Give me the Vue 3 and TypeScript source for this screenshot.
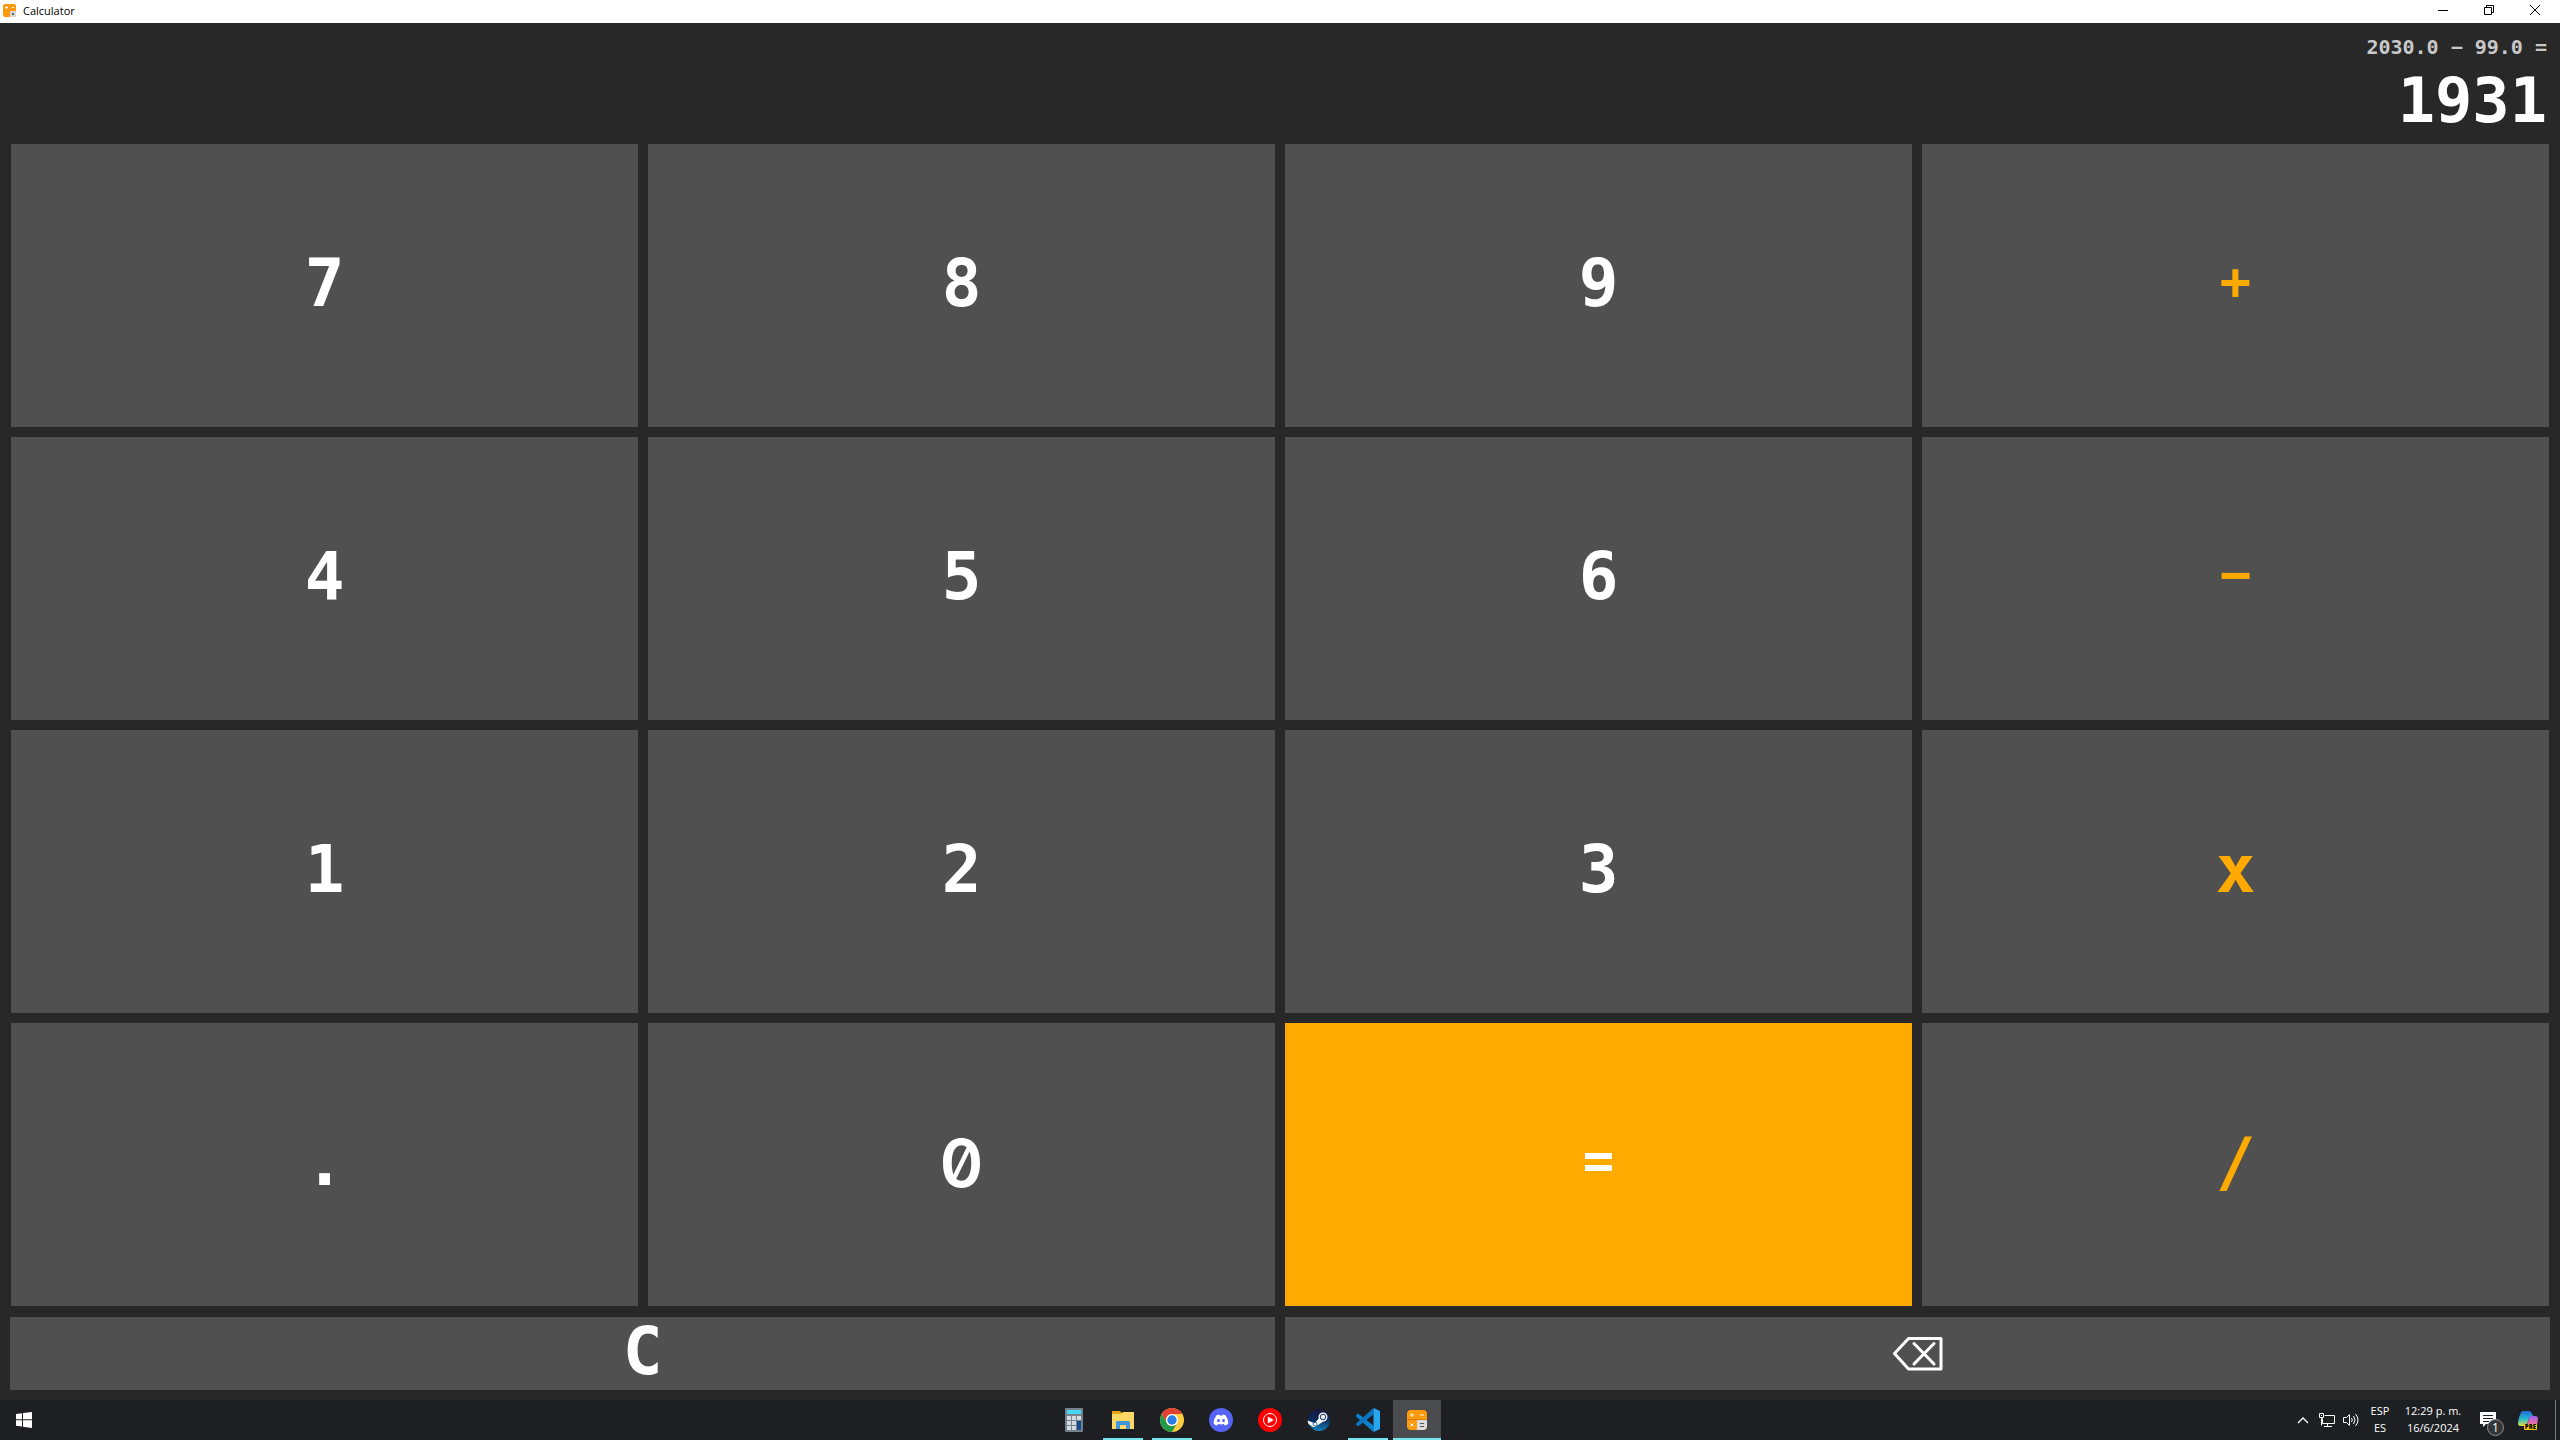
<script setup lang="ts">
import { ref } from 'vue'

interface Key {
  label: string
  kind: 'digit' | 'zero' | 'sign' | 'operator' | 'equals'
}

const keys: Key[] = [
  { label: '7', kind: 'digit' },
  { label: '8', kind: 'digit' },
  { label: '9', kind: 'digit' },
  { label: '+', kind: 'sign' },
  { label: '4', kind: 'digit' },
  { label: '5', kind: 'digit' },
  { label: '6', kind: 'digit' },
  { label: '−', kind: 'sign' },
  { label: '1', kind: 'digit' },
  { label: '2', kind: 'digit' },
  { label: '3', kind: 'digit' },
  { label: 'x', kind: 'operator' },
  { label: '.', kind: 'digit' },
  { label: '0', kind: 'zero' },
  { label: '=', kind: 'equals' },
  { label: '/', kind: 'operator' },
]

const expression = ref('2030.0 − 99.0 =')
const result = ref('1931')

function press(key: Key) {
  if (key.kind === 'digit' || key.kind === 'zero') result.value += key.label
}

function clearAll() {
  expression.value = ''
  result.value = ''
}

function backspace() {
  result.value = result.value.slice(0, -1)
}
</script>

<template>
  <div class="desktop">
    <header class="titlebar">
      <svg class="app-icon" width="13" height="13" viewBox="0 0 13 13" aria-hidden="true">
        <rect width="13" height="13" rx="2" fill="#ff9a0c" />
        <path d="M7 7h6v4a2 2 0 0 1-2 2H7z" fill="#d8d8d8" />
        <path d="M2 3.5h3M3.500 2v3M9 3.500h2" stroke="#fff" />
        <rect x="9" y="9" width="2" height="2" fill="#666" />
      </svg>
      <span class="title">Calculator</span>
      <div class="window-controls">
        <button type="button" aria-label="Minimize">
          <svg width="12" height="12" viewBox="0 0 12 12"><path d="M1 6.500h10" stroke="#000" /></svg>
        </button>
        <button type="button" aria-label="Restore">
          <svg width="12" height="12" viewBox="0 0 12 12" fill="none" stroke="#000">
            <path d="M1.500 3.500h7v7h-7zM3.500 3.500v-2h7v7h-2" />
          </svg>
        </button>
        <button type="button" aria-label="Close">
          <svg width="12" height="12" viewBox="0 0 12 12"><path d="M1 1l10 10M11 1L1 11" stroke="#000" /></svg>
        </button>
      </div>
    </header>

    <main class="calculator">
      <section class="display">
        <output class="expression">{{ expression }}</output>
        <output class="result">{{ result }}</output>
      </section>

      <section class="keypad">
        <button
          v-for="key in keys"
          :key="key.label"
          type="button"
          class="key"
          :class="key.kind"
          @click="press(key)"
        >{{ key.label }}</button>
      </section>

      <section class="actions">
        <button type="button" class="key digit" @click="clearAll">C</button>
        <button type="button" class="key" aria-label="Backspace" @click="backspace">
          <svg width="50" height="34" viewBox="0 0 50 34" fill="none" stroke="#fff" stroke-width="3">
            <path d="M1.500 16.500L15.500 1.500H48V32H15.500z" stroke-linejoin="round" />
            <path d="M21 6.500l20 20.500M41 6.500L21 27" stroke-linecap="round" />
          </svg>
        </button>
      </section>
    </main>

    <footer class="taskbar">
      <div class="start-area">
        <button type="button" class="start" aria-label="Start">
          <svg width="16" height="16" viewBox="0 0 16 16" fill="#fff">
            <path d="M0 2l6-.8v6H0zM7 1.100L16 0v7.200H7zM0 8.200h6v6.200L0 13.700zM7 8.200h9V16l-9-1.200z" />
          </svg>
        </button>
      </div>

      <nav class="apps">
        <button type="button" class="app" aria-label="Calculator tool">
          <svg width="24" height="24" viewBox="0 0 24 24">
            <rect x="3" width="18" height="24" rx="1" fill="#75828c" />
            <rect x="5" y="2" width="14" height="4" fill="#45d5fa" />
            <path d="M5 8h4v4H5zM10 8h4v4h-4zM15 8h4v4h-4zM5 13h4v4H5zM10 13h4v4h-4zM5 18h4v4H5zM10 18h4v4h-4z" fill="#d3dbe1" />
            <path d="M15 13h4v9h-4z" fill="#174a8b" />
          </svg>
        </button>
        <button type="button" class="app open" aria-label="File Explorer">
          <svg width="24" height="24" viewBox="0 0 24 24">
            <path d="M1 3h8l2 2h12v16H1z" fill="#e9a614" />
            <path d="M1 6h9l2-2h11v17H1z" fill="#ffd766" />
            <path d="M5 21v-7l1-1h12l1 1v7h-4v-4H9v4z" fill="#3f96d8" />
          </svg>
        </button>
        <button type="button" class="app open" aria-label="Chrome">
          <svg width="24" height="24" viewBox="0 0 24 24">
            <circle cx="12" cy="12" r="12" fill="#ffcd40" />
            <path d="M1.610 6A12 12 0 0 1 22.390 6H12a6 6 0 0 0-5.200 9z" fill="#e14135" />
            <path d="M1.610 6A12 12 0 0 0 12 24l5.200-9a6 6 0 0 1-10.400 0z" fill="#239a4b" />
            <circle cx="12" cy="12" r="6" fill="#fff" />
            <circle cx="12" cy="12" r="4.700" fill="#2a7ee8" />
          </svg>
        </button>
        <button type="button" class="app" aria-label="Discord">
          <svg width="24" height="24" viewBox="0 0 24 24">
            <circle cx="12" cy="12" r="12" fill="#5663f7" />
            <path d="M7.500 7.200l2.500-.7.600 1.100h2.800l.6-1.100 2.500.7c2 2.900 3 5.600 2.700 8.800-1.200.9-2.300 1.300-3.400 1.500l-.9-1.500q-2.900.8-5.800 0l-.9 1.500c-1.100-.2-2.200-.6-3.400-1.500-.3-3.200.7-5.900 2.700-8.800z" fill="#fff" />
            <circle cx="9.500" cy="12.500" r="1.500" fill="#5663f7" />
            <circle cx="14.500" cy="12.500" r="1.500" fill="#5663f7" />
          </svg>
        </button>
        <button type="button" class="app" aria-label="YouTube Music">
          <svg width="24" height="24" viewBox="0 0 24 24">
            <circle cx="12" cy="12" r="12" fill="#f00" />
            <circle cx="12" cy="12" r="6.500" fill="none" stroke="#fff" />
            <path d="M9.800 8.500l6 3.500-6 3.500z" fill="#fff" />
          </svg>
        </button>
        <button type="button" class="app" aria-label="Steam">
          <svg width="24" height="24" viewBox="0 0 24 24">
            <defs>
              <linearGradient id="steam" x1="0" y1="0" x2="0" y2="1">
                <stop offset="0" stop-color="#17173f" />
                <stop offset=".5" stop-color="#0b2b5c" />
                <stop offset="1" stop-color="#1484bd" />
              </linearGradient>
            </defs>
            <circle cx="12" cy="12" r="11" fill="url(#steam)" />
            <path d="M.5 12.500l7 2.800 4.500-3.500 3 2-4.500 3.200a4 4 0 0 1-6 1L1.500 16z" fill="#fff" />
            <path d="M8 15l5-6 4 4-6 4z" fill="#fff" />
            <circle cx="16" cy="9" r="4.500" fill="#fff" />
            <circle cx="16" cy="9" r="2.800" fill="#e8edf2" stroke="#14305a" />
            <circle cx="8" cy="16" r="2" fill="none" stroke="#17568c" stroke-width=".8" />
          </svg>
        </button>
        <button type="button" class="app open" aria-label="Visual Studio Code">
          <svg width="24" height="24" viewBox="0 0 24 24">
            <path d="M17.500 17.500L2 5.500 0 7.200v1.300L17.500 24z" fill="#0a84d0" />
            <path d="M17.500 6.500L2 18.500 0 16.800v-1.300L17.500 0z" fill="#0a74bd" />
            <path d="M17.500 0L24 3v18l-6.500 3z" fill="#29a6f2" />
          </svg>
        </button>
        <button type="button" class="app open active" aria-label="Calculator">
          <svg width="24" height="24" viewBox="0 0 24 24">
            <rect x="2" y="2" width="20" height="20" rx="4" fill="#ff9a0c" />
            <path d="M12 12h10v6a4 4 0 0 1-4 4h-6z" fill="#dcdcdc" />
            <path d="M2 11.500h20" stroke="#db7b00" />
            <path d="M5 7h4M7 5v4M15 7h4" stroke="#ffdca6" stroke-width="1.500" />
            <path d="M5.500 15.500l3 3M8.500 15.500l-3 3" stroke="#fff" />
            <path d="M15 15.500h4M15 18.500h4" stroke="#555" />
          </svg>
        </button>
      </nav>

      <div class="tray">
        <button type="button" class="tray-button chevron" aria-label="Show hidden icons">
          <svg width="12" height="8" viewBox="0 0 12 8"><path d="M1 7l5-5 5 5" fill="none" stroke="#fff" stroke-width="1.300" /></svg>
        </button>
        <button type="button" class="tray-button" aria-label="Network">
          <svg width="16" height="16" viewBox="0 0 16 16" fill="none" stroke="#fff">
            <path d="M5.500 3.500h10v8h-12v-5M8.500 11.500v3M5 14.500h8M.5 1.500h4v4h-4zM2 3.500h1M2.500 5.500v8" />
          </svg>
        </button>
        <button type="button" class="tray-button" aria-label="Volume">
          <svg width="16" height="16" viewBox="0 0 16 16" fill="none" stroke="#fff">
            <path d="M.5 5.500h3l3-3v11l-3-3h-3zM8.500 6q1.500 2 0 4M10.500 4q3 4 0 8M12.500 2q5 6 0 12" />
          </svg>
        </button>
        <button type="button" class="tray-text language"><span>ESP</span><span>ES</span></button>
        <button type="button" class="tray-text clock"><span>12:29 p. m.</span><span>16/6/2024</span></button>
        <button type="button" class="tray-button notifications" aria-label="Notifications">
          <svg width="16" height="16" viewBox="0 0 16 16">
            <path d="M0 0h16v12H6l-3 3v-3H0z" fill="#fff" />
            <path d="M3 3.500h10M3 6.500h10M3 9.500h6" stroke="#1e1f23" />
          </svg>
          <span class="badge">1</span>
        </button>
        <button type="button" class="tray-button copilot" aria-label="Copilot">
          <svg width="20" height="19" viewBox="0 0 20 19">
            <defs>
              <linearGradient id="copilotLeft" x1="0" y1="0" x2="0" y2="1">
                <stop offset="0" stop-color="#2468d8" />
                <stop offset=".5" stop-color="#22b8cf" />
                <stop offset="1" stop-color="#d9dc45" />
              </linearGradient>
              <linearGradient id="copilotRight" x1="0" y1="0" x2="0" y2="1">
                <stop offset="0" stop-color="#9c61ee" />
                <stop offset="1" stop-color="#fb7290" />
              </linearGradient>
            </defs>
            <path d="M5 0h6q2 0 2.500 2L15 5h-3L9 13q-1 2-3 2H2q-2 0-2-3Q1 5 3 1.500 4 0 5 0z" fill="url(#copilotLeft)" />
            <path d="M12 5h5q3 0 3 3l-1 6H9z" fill="url(#copilotRight)" />
          </svg>
          <span class="pre">PRE</span>
        </button>
        <button type="button" class="show-desktop" aria-label="Show desktop"></button>
      </div>
    </footer>
  </div>
</template>

<style>
body {
  margin: 0;
  background: #282828;
}
</style>

<style scoped>
.desktop {
  display: flex;
  flex-direction: column;
  min-height: 100vh;
  font-family: "Open Sans", "Noto Sans", sans-serif;
}

button {
  margin: 0;
  padding: 0;
  border: 0;
  background: transparent;
  color: #fff;
  font: inherit;
}

svg {
  display: block;
}

.titlebar {
  display: flex;
  align-items: center;
  box-sizing: border-box;
  height: 23px;
  padding: 0 2px 2px 3px;
  background: #fff;
  color: #000;
  font-size: 11px;
}

.title {
  margin-left: 7px;
}

.window-controls {
  display: flex;
  align-self: flex-start;
  margin-left: auto;
}

.window-controls button {
  display: flex;
  align-items: center;
  justify-content: center;
  width: 46px;
  height: 20px;
}

.calculator {
  display: flex;
  flex: 1;
  flex-direction: column;
  background: #282828;
  font-family: "DejaVu Sans Mono", "Liberation Mono", monospace;
  font-weight: 700;
}

.display {
  display: flex;
  flex-direction: column;
  align-items: flex-end;
  height: 107px;
  padding: 14px 13px 0 0;
}

.expression {
  color: #c8c8c8;
  font-size: 20px;
  line-height: 20px;
}

.result {
  color: #fff;
  font-size: 62px;
  line-height: 88px;
}

.keypad {
  display: grid;
  flex: 1;
  grid-template-columns: repeat(4, 1fr);
  grid-template-rows: repeat(4, 1fr);
  gap: 10px;
  padding: 0 11px;
}

.actions {
  display: grid;
  grid-template-columns: repeat(2, 1fr);
  gap: 10px;
  height: 73px;
  padding: 11px 10px 10px;
}

.key {
  display: flex;
  align-items: center;
  justify-content: center;
  background: #505050;
  font-size: 66px;
  line-height: 68px;
}

.digit,
.zero,
.operator {
  padding-bottom: 4px;
}

/* Slashed zero */
.zero {
  font-family: Inter, "DejaVu Sans Mono", monospace;
  font-feature-settings: "zero" 1;
  font-weight: 600;
}

.sign,
.equals {
  padding-bottom: 10px;
  font-size: 52px;
}

.sign,
.operator {
  color: #ffaa00;
}

.equals {
  background: #ffaa00;
}

.taskbar {
  display: grid;
  grid-template-columns: 15fr auto 16fr;
  height: 40px;
  background: #1e1f23;
  font-size: 11px;
}

.start {
  display: flex;
  align-items: center;
  justify-content: center;
  width: 48px;
  height: 40px;
}

.apps {
  display: flex;
  gap: 1px;
}

.app {
  position: relative;
  display: flex;
  align-items: center;
  justify-content: center;
  width: 48px;
}

.app.active {
  background: #4a4b4e;
}

.app.open::after {
  content: "";
  position: absolute;
  right: 4px;
  bottom: 0;
  left: 4px;
  height: 2px;
  background: #76e5ee;
}

.app.active::after {
  right: 0;
  left: 0;
}

.tray {
  display: flex;
  justify-content: flex-end;
}

.tray-button {
  display: flex;
  align-items: center;
  justify-content: center;
  width: 24px;
}

.tray-text {
  display: flex;
  flex-direction: column;
  justify-content: center;
  align-items: center;
  padding-bottom: 2px;
  line-height: 17px;
}

.language {
  width: 34px;
}

.clock {
  width: 72px;
}

.notifications {
  position: relative;
  width: 40px;
  padding-right: 2px;
}

.badge {
  position: absolute;
  right: 5px;
  bottom: 4px;
  box-sizing: border-box;
  width: 17px;
  height: 17px;
  border: 1px solid #909090;
  border-radius: 50%;
  background: #343538;
  font-size: 12px;
  line-height: 15px;
  text-align: center;
}

.copilot {
  position: relative;
  width: 46px;
  padding-right: 8px;
}

.pre {
  position: absolute;
  right: 18px;
  bottom: 10px;
  padding: 0 1px;
  border-radius: 1px;
  background: #ffc800;
  color: #000;
  font-size: 6px;
  font-weight: 800;
  line-height: 6px;
}

.show-desktop {
  width: 5px;
  border-left: 1px solid #77787b;
}
</style>
